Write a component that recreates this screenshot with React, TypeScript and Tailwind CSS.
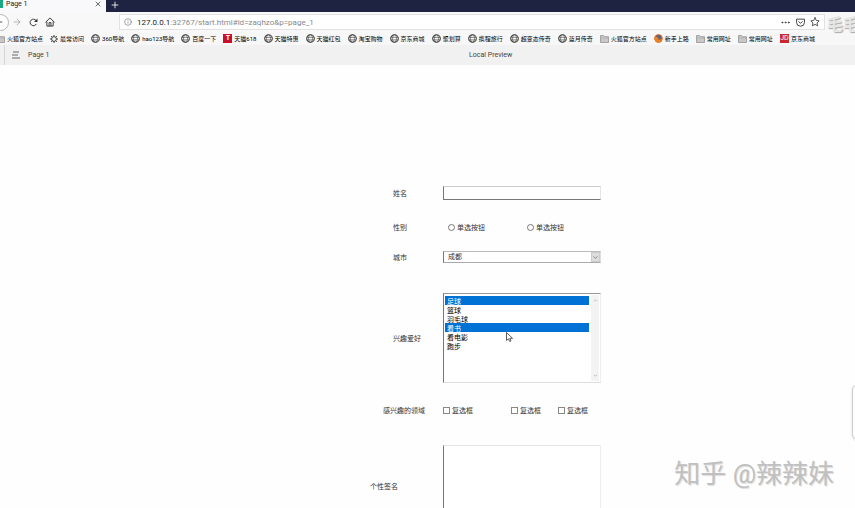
import type { ReactNode } from 'react';
import clsx from 'clsx';
import {
  FiArrowLeft,
  FiArrowRight,
  FiChevronDown,
  FiInfo,
  FiMoreHorizontal,
  FiPlus,
  FiStar,
  FiX,
} from 'react-icons/fi';

type BookmarkIcon = 'folder' | 'gear' | 'globe' | 'tmall' | 'firefox' | 'jd';

const bookmarks: { icon: BookmarkIcon; title: string }[] = [
  { icon: 'folder', title: '火狐官方站点' },
  { icon: 'gear', title: '最常访问' },
  { icon: 'globe', title: '360导航' },
  { icon: 'globe', title: 'hao123导航' },
  { icon: 'globe', title: '百度一下' },
  { icon: 'tmall', title: '天猫618' },
  { icon: 'globe', title: '天猫特惠' },
  { icon: 'globe', title: '天猫红包' },
  { icon: 'globe', title: '淘宝购物' },
  { icon: 'globe', title: '京东商城' },
  { icon: 'globe', title: '聚划算' },
  { icon: 'globe', title: '携程旅行' },
  { icon: 'globe', title: '超变态传奇' },
  { icon: 'globe', title: '蓝月传奇' },
  { icon: 'folder', title: '火狐官方站点' },
  { icon: 'firefox', title: '新手上路' },
  { icon: 'folder', title: '常用网址' },
  { icon: 'folder', title: '常用网址' },
  { icon: 'jd', title: '京东商城' },
];

const hobbies = ['足球', '篮球', '羽毛球', '看书', '看电影', '跑步'];

function BookmarkGlyph({ icon }: { icon: BookmarkIcon }) {
  switch (icon) {
    case 'folder':
      return (
        <svg viewBox="0 0 9 8" className="h-2 w-[9px] shrink-0" aria-hidden="true">
          <path d="M.5 7.5v-7h3l1 1.2h4v5.8z" fill="#c8c8c8" stroke="#8a8a8a" strokeWidth=".7" />
          <path d="M.5 3h8" stroke="#a0a0a0" strokeWidth=".5" />
        </svg>
      );
    case 'gear':
      return (
        <svg viewBox="0 0 16 16" className="size-2 shrink-0" fill="none" stroke="#444" aria-hidden="true">
          <circle cx="8" cy="8" r="4.8" strokeWidth="2" />
          <path
            d="M8 0v3M8 13v3M0 8h3M13 8h3M2.3 2.3l2.200 2.200M11.500 11.500l2.200 2.200M2.300 13.700l2.200-2.200M11.500 4.500l2.200-2.200"
            strokeWidth="2"
          />
        </svg>
      );
    case 'tmall':
      return (
        <span className="flex size-[9px] shrink-0 items-center justify-center bg-[#c8102e] text-[7px] leading-none font-bold text-white">
          T
        </span>
      );
    case 'jd':
      return (
        <span className="flex size-[9px] shrink-0 items-center justify-center bg-[#c9282d] text-[7px] leading-none text-white">
          JD
        </span>
      );
    case 'firefox':
      return (
        <svg viewBox="0 0 9 9" className="size-[9px] shrink-0" aria-hidden="true">
          <circle cx="4.5" cy="4.5" r="4.2" fill="#d9581c" />
          <circle cx="4.6" cy="3.2" r="2.2" fill="#3a6aa0" />
          <path d="M.6 2.5C1.5 3 2 2.4 3.2 3.3L5 4 3.8 5.2c1 1.3 3 .8 4.2-.6C7.6 7.4 6 8.7 4.2 8.7 1.5 8.6 0 5.5.6 2.5z" fill="#e98324" />
        </svg>
      );
    default:
      return (
        <svg viewBox="0 0 16 16" className="size-[9px] shrink-0" fill="none" stroke="#444" aria-hidden="true">
          <circle cx="8" cy="8" r="6.8" strokeWidth="1.9" />
          <ellipse cx="8" cy="8" rx="3.6" ry="6.8" strokeWidth="1.1" />
          <path d="M1.5 6h13M1.5 10.5h13" strokeWidth="1.1" />
        </svg>
      );
  }
}

function BrowserChrome() {
  return (
    <header>
      <div className="flex h-3 bg-[#1f2342] text-white">
        <div className="flex w-[106px] items-start bg-[#f9f9fb] pr-1 text-[#222]">
          <span className="h-2 w-[3px] bg-[#17a884]" />
          <span className="ml-[3px] flex-1 text-[7px] leading-2">Page 1</span>
          <button type="button" aria-label="Close tab">
            <FiX className="size-2" />
          </button>
        </div>
        <button type="button" aria-label="New tab" className="ml-1 h-2">
          <FiPlus className="size-[10px]" />
        </button>
      </div>

      <div className="flex h-5 items-center bg-[#f8f8f9] text-[#333]">
        <button
          type="button"
          aria-label="Back"
          className="-ml-2 flex size-[17px] items-center justify-end rounded-full border border-[#b5b5b5] bg-white pr-1"
        >
          <FiArrowLeft className="size-[10px] shrink-0" />
        </button>
        <button type="button" aria-label="Forward" className="ml-[3px] text-[#aaa]">
          <FiArrowRight className="size-[10px]" />
        </button>
        <button type="button" aria-label="Reload" className="ml-[7px]">
          <svg viewBox="0 0 16 16" className="size-[9px]" fill="none" stroke="currentColor" strokeWidth="1.7">
            <path d="M13 10.5A5.8 5.8 0 1 1 12.5 4.5" />
            <path d="M15 1v6H9z" fill="currentColor" stroke="none" />
          </svg>
        </button>
        <button type="button" aria-label="Home" className="ml-[7px]">
          <svg viewBox="0 0 16 16" className="size-[10px]" fill="none" stroke="currentColor" strokeWidth="1.5">
            <path d="M.8 8.5 8 1.5l7.200 7M3 7.500v7h10v-7" />
            <path d="M6.5 14.5V9h3v5.500" />
          </svg>
        </button>
        <div className="mr-[30px] ml-16 flex h-4 flex-1 items-center border border-[#e2e2e2] bg-white px-1">
          <FiInfo className="size-2 text-[#777]" aria-hidden="true" />
          <p className="ml-[5px] flex-1 pt-px text-[8px] leading-none text-[#888]">
            <span className="text-[#222]">127.0.0.1</span>:32767/start.html#id=zaqhzo&amp;p=page_1
          </p>
          <button type="button" aria-label="Page actions">
            <FiMoreHorizontal className="size-[11px]" />
          </button>
          <button type="button" aria-label="Save to Pocket" className="ml-[5px]">
            <svg viewBox="0 0 16 16" className="size-[9px]" fill="none" stroke="currentColor" strokeWidth="1.6">
              <path d="M1 2h14v6a7 6.5 0 0 1-14 0z" />
              <path d="M4.5 6 8 9.5 11.5 6" />
            </svg>
          </button>
          <button type="button" aria-label="Bookmark this page" className="ml-[5px]">
            <FiStar className="size-[10px]" />
          </button>
        </div>
      </div>

      <nav className="flex h-[13px] items-center justify-between bg-[#f7f7f8] pr-10 text-[6px] leading-2 whitespace-nowrap text-black">
        {bookmarks.map((bookmark, index) => (
          <a
            key={index}
            href="#"
            className={clsx('flex items-center gap-[2px]', index === 0 && '-ml-1')}
          >
            <BookmarkGlyph icon={bookmark.icon} />
            {bookmark.title}
          </a>
        ))}
      </nav>
    </header>
  );
}

function PreviewBar() {
  return (
    <div className="flex h-5 items-center bg-[#f1f1f1] text-[7px] text-[#444]">
      <div className="ml-1 flex h-full flex-[4] items-center border-l border-[#d5d5d5] pl-[7px]">
        <button type="button" aria-label="Toggle page list">
          <svg viewBox="0 0 8 8" className="size-2" stroke="#444" strokeWidth=".8">
            <path d="M1 1h6M0 4h6M0 7h8" />
          </svg>
        </button>
        <span className="ml-2">Page 1</span>
      </div>
      <span>Local Preview</span>
      <div className="flex-[3]" />
    </div>
  );
}

interface FormRowProps {
  label: string;
  htmlFor?: string;
  className?: string;
  labelClassName?: string;
  children: ReactNode;
}

function FormRow({ label, htmlFor, className, labelClassName, children }: FormRowProps) {
  return (
    <div className={clsx('flex items-center', className)}>
      <div className={clsx('w-[73px] shrink-0 pt-[2px]', labelClassName ?? 'pl-[23px]')}>
        {htmlFor ? <label htmlFor={htmlFor}>{label}</label> : <span>{label}</span>}
      </div>
      {children}
    </div>
  );
}

function SignupForm() {
  return (
    <form className="ml-[370px] w-[231px] pt-[121px] text-[7px] leading-3 text-[#333]">
      <FormRow label="姓名" htmlFor="name">
        <input
          id="name"
          type="text"
          className="h-[14px] w-full border border-t-[#ccc] border-r-[#e5e5e5] border-b-[#777] border-l-[#777] bg-white px-1 outline-none"
        />
      </FormRow>

      <FormRow label="性别" className="mt-5">
        <div className="flex pt-px pl-[5px]">
          {['gender-a', 'gender-b'].map((id) => (
            <label key={id} htmlFor={id} className="flex w-[79px] items-center gap-[2px]">
              <input
                id={id}
                type="radio"
                name="gender"
                className="size-[7px] appearance-none rounded-full border border-[#777] bg-white checked:bg-[#555]"
              />
              单选按钮
            </label>
          ))}
        </div>
      </FormRow>

      <FormRow label="城市" htmlFor="city" className="mt-4">
        <div className="relative w-full">
          <select
            id="city"
            className="block h-3 w-full appearance-none border border-t-[#bbb] border-r-[#ddd] border-b-[#aaa] border-l-[#777] bg-white pl-1 text-[7px] leading-[10px] outline-none"
          >
            <option>成都</option>
          </select>
          <span className="pointer-events-none absolute inset-y-px right-px flex w-[9px] items-center justify-center border border-[#ccc] bg-[#ddd]">
            <FiChevronDown className="size-[7px] text-[#555]" />
          </span>
        </div>
      </FormRow>

      <FormRow label="兴趣爱好" htmlFor="hobbies" className="mt-[29px]">
        <div className="flex h-[90px] w-full border border-t-[#999] border-r-[#eee] border-b-[#ddd] border-l-[#777] bg-white p-px">
          <select
            id="hobbies"
            multiple
            defaultValue={['足球', '看书']}
            className="min-w-0 flex-1 overflow-hidden pt-px text-[7px] text-black outline-none"
          >
            {hobbies.map((hobby) => (
              <option
                key={hobby}
                className="h-[9px] min-h-0 px-[2px] py-0 leading-[9px] checked:bg-[linear-gradient(#0072d6,#0072d6)] checked:text-white"
              >
                {hobby}
              </option>
            ))}
          </select>
          <div className="ml-[2px] flex w-2 flex-col items-center justify-between bg-[#f3f3f3] py-1" aria-hidden="true">
            <svg viewBox="0 0 6 4" className="h-[3px] w-[5px]" fill="none" stroke="#aaa">
              <path d="M1 3l2-2 2 2" />
            </svg>
            <svg viewBox="0 0 6 4" className="h-[3px] w-[5px]" fill="none" stroke="#aaa">
              <path d="M1 1l2 2 2-2" />
            </svg>
          </div>
        </div>
      </FormRow>

      <FormRow label="感兴趣的领域" className="mt-5" labelClassName="pl-[13px]">
        <div className="grid w-full grid-cols-[68px_47px_1fr] pt-px">
          {['field-a', 'field-b', 'field-c'].map((id) => (
            <label key={id} htmlFor={id} className="flex items-center gap-[2px]">
              <input
                id={id}
                type="checkbox"
                className="size-[7px] appearance-none border border-[#888] bg-white checked:bg-[#555]"
              />
              复选框
            </label>
          ))}
        </div>
      </FormRow>

      <FormRow label="个性签名" htmlFor="signature" className="mt-7" labelClassName="pl-0">
        <textarea
          id="signature"
          className="block h-[82px] w-full resize-none border border-t-[#e5e5e5] border-r-[#eee] border-b-[#ddd] border-l-[#777] bg-white outline-none"
        />
      </FormRow>
    </form>
  );
}

export default function App() {
  return (
    <div
      lang="zh-CN"
      className="relative flex h-screen flex-col overflow-hidden bg-[#fefefe] font-[Roboto,'Noto_Sans_CJK_SC',sans-serif]"
    >
      <BrowserChrome />
      <PreviewBar />
      <main className="min-h-0 flex-1 overflow-hidden">
        <SignupForm />
      </main>

      {/* mouse pointer over the list */}
      <svg viewBox="0 0 7 10" className="absolute top-[332px] left-[506px] h-[10px] w-[7px]" aria-hidden="true">
        <path d="M.5.5v8l2-1.7 1.2 2.7 1.3-.6-1.2-2.6h2.7z" fill="#fff" stroke="#333" strokeWidth=".8" />
      </svg>

      {/* watermarks */}
      <span className="absolute top-[13px] left-[827px] text-[16px] leading-6 font-bold whitespace-nowrap text-[#e6e6e6] [text-shadow:1px_1px_1px_#aaa]">
        毛毛
      </span>
      <span className="absolute right-[21px] bottom-[18px] text-[26px] leading-8 whitespace-nowrap text-[#c0c0c0] [text-shadow:1px_1px_1px_#ddd]">
        知乎 @辣辣妹
      </span>
      <div className="absolute top-[384px] -right-[9px] h-14 w-3 rounded-lg border border-[#ccc] bg-white shadow" />
    </div>
  );
}
